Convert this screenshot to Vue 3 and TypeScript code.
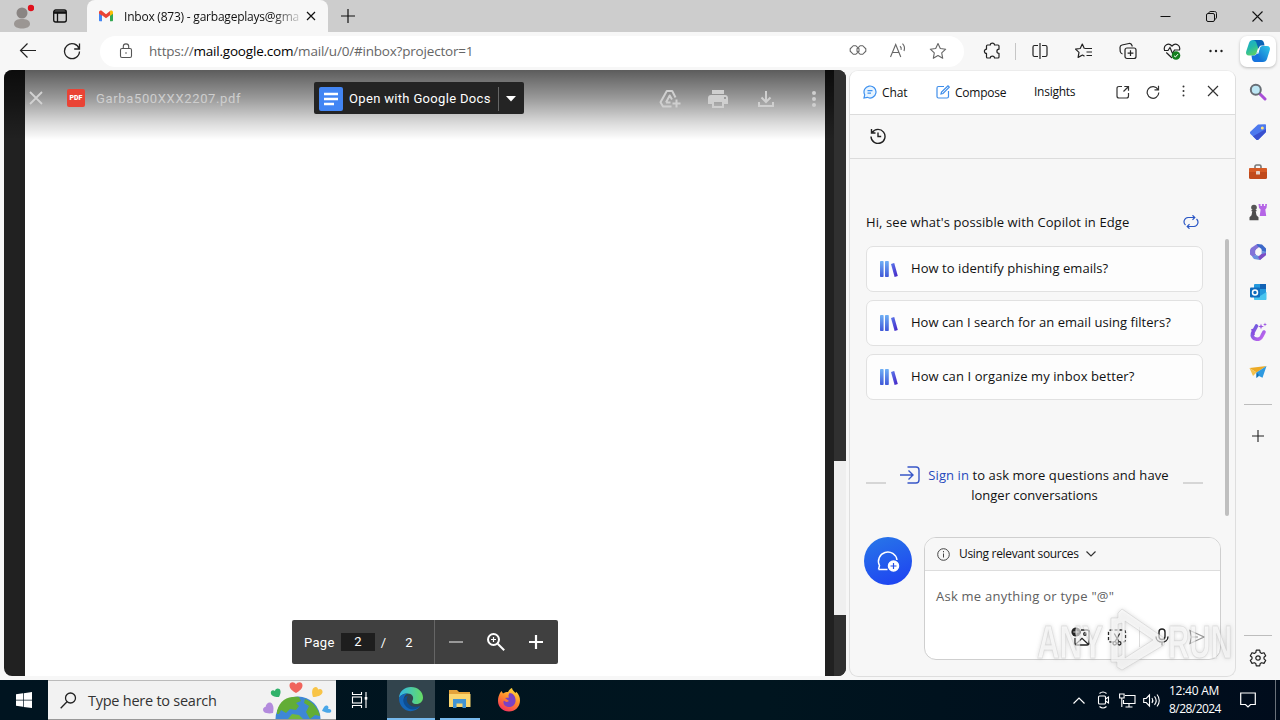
<script setup lang="ts">
const prompts: { text: string; cls: string }[] = [
  { text: 'How to identify phishing emails?', cls: 'p1' },
  { text: 'How can I search for an email using filters?', cls: 'p2' },
  { text: 'How can I organize my inbox better?', cls: 'p3' },
]
</script>

<template>
  <div class="desktop">
    <header class="titlebar">
      <div class="slot avatar">
        <svg width="24" height="28" viewBox="0 0 24 28"><circle cx="12" cy="11" r="5.500" fill="#8a8583"/><path d="M4 22c0-4 4-5 8-5s8 1 8 5c0 3-4 4.500-8 4.500S4 25 4 22z" fill="#9b9693"/><circle cx="21" cy="6" r="3.200" fill="#e0101c"/></svg>
      </div>
      <div class="slot spaces">
        <svg width="16" height="16" viewBox="0 0 16 16" fill="none" stroke="#111" stroke-width="1.300"><rect x="1.700" y="2" width="12.600" height="12" rx="2"/><path d="M2 4.500h12" stroke-width="2.600"/><path d="M5.500 5v9"/></svg>
      </div>
      <div class="tab">
        <svg class="gmail" width="16" height="16" viewBox="0 0 16 16"><path d="M1 5v7.200c0 .6.400 1 1 1h2V7z" fill="#4285f4"/><path d="M12 7v6.200h2c.6 0 1-.4 1-1V5z" fill="#34a853"/><path d="M1 4.500C1 2.600 3 2.200 4 3l4 3.200L12 3v4.200L8 10.300 4 7.300v.4L1 5.500z" fill="#ea4335"/><path d="M12 3c1.200-.9 3-.3 3 1.500v1.200l-3 2.200z" fill="#fbbc04"/></svg>
        <span class="tab-title">Inbox (873) - garbageplays@gma</span>
        <svg class="tab-x" width="10" height="10" viewBox="0 0 10 10" stroke="#111" stroke-width="1.200"><path d="M1 1l8 8M9 1L1 9"/></svg>
      </div>
      <div class="slot newtab"><svg width="14" height="14" viewBox="0 0 14 14" stroke="#111" stroke-width="1.200"><path d="M7 0v14M0 7h14"/></svg></div>
      <div class="winbtns">
        <div class="win"><svg width="11" height="11" viewBox="0 0 11 11" stroke="#111"><path d="M.5 5.500h10"/></svg></div>
        <div class="win"><svg width="11" height="11" viewBox="0 0 11 11" fill="none" stroke="#111"><rect x=".5" y="2.500" width="8" height="8" rx="1.500"/><path d="M2.700 2.300C3 1 3.500.5 5 .5h3.500c1.300 0 2 .7 2 2V6c0 1.500-.6 2-1.800 2.300"/></svg></div>
        <div class="win"><svg width="11" height="11" viewBox="0 0 11 11" stroke="#111" stroke-width="1.100"><path d="M.5.5l10 10M10.500.5l-10 10"/></svg></div>
      </div>
    </header>

    <div class="toolbar">
      <div class="slot tb first"><svg width="18" height="18" viewBox="0 0 18 18" fill="none" stroke="#222" stroke-width="1.200"><path d="M17 8.500H1.500M8.500 1.500l-7 7 7 7"/></svg></div>
      <div class="slot tb"><svg width="18" height="18" viewBox="0 0 18 18" fill="none" stroke="#222" stroke-width="1.300"><path d="M16.200 7A7.500 7.500 0 1 0 16.500 9.500M16.500 1.500V7h-5.300"/></svg></div>
      <div class="address">
        <svg class="lock" width="14" height="16" viewBox="0 0 14 16" fill="none" stroke="#555" stroke-width="1.100"><rect x="1.500" y="5.500" width="11" height="9" rx="1.500"/><path d="M4.300 5.500V3.600a2.700 2.700 0 0 1 5.400 0v1.900"/><circle cx="7" cy="10" r=".8" fill="#555" stroke="none"/></svg>
        <span class="url"><span>https://</span><b>mail.google.com</b><span class="path">/mail/u/0/#inbox?projector=1</span></span>
        <div class="addr-icons">
          <div class="ai"><svg width="18" height="16" viewBox="0 0 18 16" fill="none" stroke="#666" stroke-width="1.100"><path d="M8.300 5.200L6.800 3.700H4.300L1.200 6.800v2.400l3.100 3.100h2.500l1.500-1.500M9.700 5.200l1.500-1.500h2.500l3.100 3.100v2.400l-3.100 3.100h-2.500L8 9.200V6.800zM8.300 5.200L10 6.800v2.400l-1.700 1.600"/></svg></div>
          <div class="ai"><svg width="18" height="17" viewBox="0 0 18 17" fill="none" stroke="#666" stroke-width="1.100"><path d="M1.500 15L6.700 2.500 11.800 15M3.500 10.500h6.500M11 4.200c1 .8 1.500 2.200 1.100 3.600M13.500 1.700c2 1.900 2.400 4.600 1.500 7.300"/></svg></div>
          <div class="ai"><svg width="18" height="18" viewBox="0 0 18 18" fill="none" stroke="#666" stroke-width="1.100" stroke-linejoin="round"><path d="M9 1.500l2.300 5 5.400.7-4 3.700 1 5.400L9 13.600l-4.700 2.700 1-5.400-4-3.700 5.400-.7z"/></svg></div>
        </div>
      </div>
      <div class="slot tb ext"><svg width="18" height="18" viewBox="0 0 18 18" fill="none" stroke="#222" stroke-width="1.200" stroke-linejoin="round"><path d="M4.500 3h2.800c0-2.600 4.200-2.600 4.200 0H15c.6 0 1 .4 1 1v3.200c-2.800 0-2.800 4.200 0 4.200V15c0 .6-.4 1-1 1h-3.500c0-2.600-4.200-2.600-4.200 0H4.500c-.6 0-1-.4-1-1v-3.600c-2.800 0-2.800-4.200 0-4.200V4c0-.6.400-1 1-1z"/></svg></div>
      <i class="tbsep"></i>
      <div class="slot tb"><svg width="18" height="16" viewBox="0 0 18 16" fill="none" stroke="#222" stroke-width="1.200"><path d="M7 2.500H3.500c-1 0-1.500.5-1.500 1.500v8c0 1 .5 1.500 1.500 1.500H7M11 2.500h3.500c1 0 1.500.5 1.500 1.500v8c0 1-.5 1.500-1.500 1.500H11M9 0v16"/></svg></div>
      <div class="slot tb"><svg width="18" height="18" viewBox="0 0 18 18" fill="none" stroke="#222" stroke-width="1.200" stroke-linejoin="round"><path d="M9.500 6.500H17M11.500 10H17M11.500 13.500H17M9.300 6.500L7.300 2 5.200 6.500l-4.700.6 3.500 3.300-.9 5L7.500 13l2 1.200"/></svg></div>
      <div class="slot tb"><svg width="18" height="18" viewBox="0 0 18 18" fill="none" stroke="#222" stroke-width="1.200"><rect x="6" y="6" width="11" height="10.500" rx="2"/><path d="M11.500 8.200V14M8.600 11.200h5.800M3.500 12C2 11.500 1.500 11 1.200 9.500L1 5.500C1 4 1.500 3.300 3 3l7-1.500c1.700-.3 2.500.2 3 2l.2 1"/></svg></div>
      <div class="slot tb"><svg width="18" height="18" viewBox="0 0 18 18" fill="none" stroke="#222" stroke-width="1.200"><path d="M1.500 8C.2 3 5.500.2 9 4c3.500-3.800 8.800-1 7.500 4M3.300 10.500L9 16M1 8.500h4L7 5.500l2.500 6 2-3.500H17"/><circle cx="13" cy="13.500" r="4.300" fill="#15801f" stroke="none"/><path d="M11 13.700l1.400 1.300 2.600-2.900" stroke="#fff" stroke-width="1"/></svg></div>
      <div class="slot tb"><svg width="16" height="4" viewBox="0 0 16 4" fill="#222"><circle cx="2.500" cy="2" r="1.200"/><circle cx="8" cy="2" r="1.200"/><circle cx="13.500" cy="2" r="1.200"/></svg></div>
      <div class="copilot-btn">
        <svg width="26" height="24" viewBox="0 0 26 24"><defs><linearGradient id="ca" x1="0" y1="0" x2=".6" y2="1"><stop offset="0" stop-color="#18a8d8"/><stop offset=".5" stop-color="#25b9a8"/><stop offset="1" stop-color="#63d65c"/></linearGradient><linearGradient id="cb" x1="1" y1="0" x2="0" y2="1"><stop offset="0" stop-color="#2fc8e8"/><stop offset="1" stop-color="#0b58cf"/></linearGradient></defs><path d="M8 1h9l-2 2-3.500 11c-.5 1.500-1.500 2.500-3 2.500H4c-2.500 0-3.500-1.700-2.800-4L4 4c.6-2 2-3 4-3z" fill="url(#ca)"/><path d="M8 1h7.500c2 0 3 1 3.500 3l.5 2.500H17c-1.500 0-2.600.5-3.200 2.400L13.500 10 11.800 5C11 2.500 10.400 1.300 8 1z" fill="#0a63b5"/><path d="M18 23H9l2-2 3.500-11c.5-1.800 1.500-3 3-3H22c2.500 0 3.500 1.700 2.800 4L22 20c-.6 2-2 3-4 3z" fill="url(#cb)"/><path d="M18 23h-7.500C8.500 23 7.500 22 7 20l-.5-3.500H9c1.500 0 2.500-1 3-2.500l.5-1.500 1.700 6.500c.8 2.500 1.400 3.700 3.800 4z" fill="#1673de"/><path d="M13.700 9.500h1l-1.500 5.200h-1.200z" fill="#fff"/></svg>
      </div>
    </div>

    <main class="content">
      <section class="viewer">
        <div class="page"></div>
        <div class="track"><div class="thumb"></div></div>
        <div class="vhead">
          <svg class="vx" width="14" height="14" viewBox="0 0 14 14" stroke="#d2d2d2" stroke-width="1.800"><path d="M1 1l12 12M13 1L1 13"/></svg>
          <div class="pdf">PDF</div>
          <span class="fname">Garba500XXX2207.pdf</span>
          <div class="openwith">
            <svg width="24" height="24" viewBox="0 0 24 24"><rect width="24" height="24" rx="2" fill="#4285f4"/><path d="M5 7h14M5 12h14M5 17h10" stroke="#fff" stroke-width="2.400"/></svg>
            <span class="owt">Open with Google Docs</span>
            <i></i>
            <svg width="10" height="6" viewBox="0 0 10 6" fill="#fff"><path d="M0 0h10L5 5.500z"/></svg>
          </div>
          <div class="vicons">
            <div class="vi"><svg width="22" height="20" viewBox="0 0 22 20" fill="none" stroke="#cfcfcf" stroke-width="2" stroke-linejoin="round"><path d="M16.500 8.500L13.200 2H7.800L1.500 13.200 4 17.500h8.500M7 13.500l3.700-7 2.300 4M7 13.500h4.500M17.500 10.500v8M13.500 14.500h8"/></svg></div>
            <div class="vi"><svg width="20" height="18" viewBox="0 0 20 18" fill="#cfcfcf"><path d="M4 0h12v4H4zM3 5h14c1.700 0 3 1.300 3 3v6h-4v4H4v-4H0V8c0-1.700 1.300-3 3-3zm3 7v4h8v-4zm10-5v2h2V7z" fill-rule="evenodd"/></svg></div>
            <div class="vi"><svg width="16" height="16" viewBox="0 0 16 16" fill="none" stroke="#cfcfcf" stroke-width="2"><path d="M8 0v11M3.500 6.500L8 11l4.500-4.500M1 11v4h14v-4"/></svg></div>
            <div class="vi"><svg width="4" height="16" viewBox="0 0 4 16" fill="#cfcfcf"><circle cx="2" cy="2" r="2"/><circle cx="2" cy="8" r="2"/><circle cx="2" cy="14" r="2"/></svg></div>
          </div>
        </div>
        <div class="pager">
          <span class="pg">Page</span><span class="num">2</span><span class="slash">/</span><span class="total">2</span>
          <i></i>
          <div class="pz"><svg width="14" height="2"><path d="M0 1h14" stroke="#999" stroke-width="2"/></svg></div>
          <div class="pz"><svg width="18" height="18" viewBox="0 0 18 18" fill="none" stroke="#fff" stroke-width="2"><circle cx="6.500" cy="6.500" r="5.500"/><path d="M10.700 10.700l6.500 6.500"/><path d="M6.500 4v5M4 6.500h5" stroke-width="1.200"/></svg></div>
          <div class="pz"><svg width="14" height="14" stroke="#fff" stroke-width="2.200"><path d="M7 0v14M0 7h14"/></svg></div>
        </div>
      </section>

      <aside class="copilot">
        <div class="chead">
          <svg class="ic-chat" width="14" height="14" viewBox="0 0 14 14" fill="none" stroke="#3f91ef" stroke-width="1.200"><path d="M1 13l.7-3.200A6 6 0 1 1 4.200 12.300z" fill="#e7f4ff"/><path d="M4.500 5.700h5M4.500 8.200h3.500"/></svg>
          <span class="t-chat">Chat</span>
          <svg class="ic-comp" width="14" height="14" viewBox="0 0 14 14" fill="none" stroke="#3f8eea" stroke-width="1.200"><path d="M8 1.500H2.500c-1 0-1.500.5-1.500 1.500v8.500c0 1 .5 1.500 1.500 1.500H11c1 0 1.500-.5 1.500-1.500V6M5 9l.5-2L12 .8l1.300 1.300L7 8.500z"/></svg>
          <span class="t-comp">Compose</span>
          <span class="t-ins">Insights</span>
          <div class="cicons">
            <div class="ci"><svg width="14" height="14" viewBox="0 0 14 14" fill="none" stroke="#333" stroke-width="1.200"><path d="M6 1.500H3C1.700 1.500 1 2.200 1 3.500V11c0 1.300.7 2 2 2h7.500c1.300 0 2-.7 2-2V8M8.300 1.500h4.200v4.200M12.500 1.500L7.500 6.500"/></svg></div>
            <div class="ci"><svg width="14" height="14" viewBox="0 0 14 14" fill="none" stroke="#333" stroke-width="1.200"><path d="M12 4.500A5.800 5.800 0 1 0 12.800 7.500M12.500.8v4H8.500"/></svg></div>
            <div class="ci"><svg width="3" height="12" viewBox="0 0 3 12" fill="#333"><circle cx="1.500" cy="1.500" r="1"/><circle cx="1.500" cy="6" r="1"/><circle cx="1.500" cy="10.500" r="1"/></svg></div>
            <div class="ci"><svg width="12" height="12" viewBox="0 0 12 12" stroke="#333" stroke-width="1.200"><path d="M1 1l10 10M11 1L1 11"/></svg></div>
          </div>
        </div>
        <div class="chist"><svg width="16" height="16" viewBox="0 0 16 16" fill="none" stroke="#222" stroke-width="1.400"><path d="M2.200 4.500A7 7 0 1 1 1 8.500M1.500 1v4h4M8 4.500v4h3.200"/></svg></div>
        <div class="cbody">
          <div class="greet"><span class="t-hi">Hi, see what's possible with Copilot in Edge</span>
            <svg width="16" height="14" viewBox="0 0 16 14" fill="none" stroke="#2b57c5" stroke-width="1.200"><path d="M2.500 10A4.300 4.300 0 0 1 5 2.500h6.500M9.500.3l2.300 2.200-2.300 2.300M13.500 4A4.300 4.300 0 0 1 11 11.500H4.500M6.500 9.200l-2.300 2.300 2.300 2.200"/></svg>
          </div>
          <div v-for="p in prompts" :key="p.cls" class="card">
            <svg width="20" height="16" viewBox="0 0 20 16"><defs><linearGradient id="bk" x1="0" y1="0" x2="0" y2="1"><stop offset="0" stop-color="#6fb0f5"/><stop offset="1" stop-color="#4058d8"/></linearGradient><linearGradient id="bl" x1="0" y1="0" x2="1" y2="1"><stop offset="0" stop-color="#5b7cec"/><stop offset="1" stop-color="#4420c4"/></linearGradient></defs><rect x="1" y="0" width="3.600" height="16" rx=".8" fill="url(#bk)"/><rect x="6" y="0" width="3.800" height="16" rx=".8" fill="url(#bk)"/><path d="M12 3l3.200-1 3.600 13-3.200 1z" fill="url(#bl)"/></svg>
            <span :class="p.cls">{{ p.text }}</span>
          </div>
          <div class="signin">
            <i></i>
            <div class="st">
              <div class="sl"><svg width="20" height="18" viewBox="0 0 20 18" fill="none" stroke="#3857c8" stroke-width="1.400"><path d="M0 9h13M8.500 4.500L13 9l-4.500 4.500M7.500 1H16c2 0 3 1 3 3v10c0 2-1 3-3 3H7.500"/></svg><span class="t-s1"><em>Sign in</em> to ask more questions and have</span></div>
              <div class="sl"><span class="t-s2">longer conversations</span></div>
            </div>
            <i></i>
          </div>
          <div class="ask">
            <div class="topic"><svg width="24" height="24" viewBox="0 0 24 24" fill="none" stroke="#fff" stroke-width="1.500"><path d="M2.500 20.500l1-4A9.300 9.300 0 1 1 21 11M2.500 20.500h9"/><circle cx="17.500" cy="17" r="5" fill="#fff"/><path d="M17.500 14v6M14.500 17h6" stroke="#254fe5" stroke-width="1.200"/></svg></div>
            <div class="box">
              <div class="src"><svg width="13" height="13" viewBox="0 0 13 13" fill="none" stroke="#444"><circle cx="6.500" cy="6.500" r="5.800"/><path d="M6.500 5.500v4M6.500 3v1.300"/></svg><span class="t-src">Using relevant sources</span><svg width="10" height="6" viewBox="0 0 10 6" fill="none" stroke="#333" stroke-width="1.200"><path d="M.5.5L5 5 9.500.5"/></svg></div>
              <div class="ph">Ask me anything or type "@"</div>
              <div class="tools">
                <svg width="20" height="20" viewBox="0 0 20 20" fill="none" stroke="#222" stroke-width="1.300"><path d="M10 3h6c1.300 0 2 .7 2 2v11c0 1.300-.7 2-2 2H6c-1.300 0-2-.7-2-2v-5M4.700 17.300l6.300-6 6.300 6"/><circle cx="14" cy="7" r="1.300"/><circle cx="5" cy="5" r="4.600" fill="#222" stroke="none"/><path d="M5 2.300v5.400M2.300 5h5.400" stroke="#ddd" stroke-width="1"/></svg>
                <svg width="20" height="18" viewBox="0 0 20 18" fill="none" stroke="#222" stroke-width="1.300"><path d="M5.500 14H4c-1.700 0-2.500-.8-2.500-2.500v-7C1.500 2.800 2.300 2 4 2h12c1.700 0 2.500.8 2.500 2.500v7c0 1.700-.8 2.500-2.500 2.500h-1.500" stroke-dasharray="3 2"/><path d="M7.300 5.500l4.500 8M12.700 5.500l-4.500 8"/><circle cx="7.700" cy="15.300" r="1.700"/><circle cx="12.300" cy="15.300" r="1.700"/></svg>
                <i></i>
                <svg width="14" height="18" viewBox="0 0 14 18" fill="none" stroke="#222" stroke-width="1.400"><rect x="4" y="1" width="6" height="10.500" rx="3"/><path d="M1 8.500c0 7.500 12 7.500 12 0M7 14v3.500"/></svg>
                <svg width="16" height="16" viewBox="0 0 16 16" fill="none" stroke="#999" stroke-width="1.200"><path d="M2.500 8L1 1.500 15 8 1 14.500zM2.500 8H9"/></svg>
              </div>
            </div>
          </div>
          <div class="cscroll"></div>
        </div>
      </aside>

      <nav class="side">
        <div class="si"><svg width="18" height="18" viewBox="0 0 18 18"><path d="M11 11l5 5" stroke="#a94fd8" stroke-width="3" stroke-linecap="round"/><circle cx="6.800" cy="6.800" r="5" fill="#bde7f5" stroke="#686e75" stroke-width="2"/></svg></div>
        <div class="si"><svg width="18" height="18" viewBox="0 0 18 18"><path d="M9 1.500l7-.2c.6 0 1 .4 1 1V9l-7.500 7.500c-.8.7-1.600.7-2.300 0L1.500 11c-.7-.8-.7-1.600 0-2.400z" fill="#4d79ee"/><path d="M17 6v3l-7.500 7.500c-.8.7-1.600.7-2.300 0L4 13.300z" fill="#3a51cf"/><circle cx="13.300" cy="5" r="1.500" fill="#ffe27a"/></svg></div>
        <div class="si"><svg width="18" height="18" viewBox="0 0 18 18"><path d="M6 5V3.500C6 2.700 6.500 2 7.500 2h3c1 0 1.500.7 1.500 1.500V5" fill="none" stroke="#777" stroke-width="1.600"/><rect x="0" y="5" width="18" height="11" rx="1.500" fill="#c14a1b"/><path d="M0 6.500C0 5.500.6 5 1.500 5h15c1 0 1.500.5 1.500 1.500V9H0z" fill="#d65a24"/><rect x="7" y="8" width="4" height="3.500" rx=".6" fill="#e6d3c9"/></svg></div>
        <div class="si"><svg width="18" height="18" viewBox="0 0 18 18"><path d="M9.500 1h2v2h1.400V1h2v2h1.300V1H18l-.5 4-1.200 1.500.9 6.500H10.700l.9-6.500L10 5z" fill="#b565e6"/><circle cx="5" cy="4.500" r="2.800" fill="#555"/><path d="M2.500 7h5v1.300H6.700l.8 4 2 2v3H.5v-3l2-2 .8-4h-.8z" fill="#4d4d4d"/></svg></div>
        <div class="si"><svg width="18" height="18" viewBox="0 0 18 18"><path d="M2 5l6-4 4 1.500-5 4v5.500L4 14l-3-2.500V7z" fill="#8273d8"/><path d="M8 1l5 .5 4 4v4.500l-4.500-2.500V6L8.500 3z" fill="#3c68c9"/><path d="M17 8.500V12l-6 5-6-1-2-2.500 4-1.500 3 1 2.500-2V8z" fill="#6b90df"/><path d="M17 10v2l-6 5-2-3 3.500-3z" fill="#7d4cc4"/><path d="M9 5.800l3.200 1.700v3.300L9 12.500l-2.800-1.700V7.500z" fill="#f7f7f7"/></svg></div>
        <div class="si"><svg width="18" height="18" viewBox="0 0 18 18"><rect x="5" y="1" width="12" height="15" rx="1" fill="#2498dc"/><path d="M5 9l6 4 6.500-4V16c0 .6-.4 1-1 1H6c-.6 0-1-.4-1-1z" fill="#49c5ef"/><path d="M11 1h6v5h-6z" fill="#1263b5"/><rect x="1" y="4.500" width="10" height="10" rx="1" fill="#0f6cbd"/><circle cx="6" cy="9.500" r="2.500" fill="none" stroke="#fff" stroke-width="1.500"/></svg></div>
        <div class="si"><svg width="18" height="20" viewBox="0 0 18 20" fill="none"><defs><linearGradient id="dg" x1="0" y1="0" x2="1" y2="1"><stop offset="0" stop-color="#6658dc"/><stop offset="1" stop-color="#c765ee"/></linearGradient></defs><path d="M7.500 4L3.500 11.500c-1.800 6 7.500 8 9.500 2.500.8-1.800 1.500-2.800 2-4" stroke="url(#dg)" stroke-width="3.600" stroke-linecap="round"/><path d="M3 7l2 6" stroke="#8a4be0" stroke-width="2"/><path d="M12 1.500l.7 2.300 2.300.7-2.300.7L12 7.500l-.7-2.300L9 4.500l2.300-.7zM16 .5l.5 1.500L18 2.500l-1.500.5L16 4.500 15.500 3 14 2.500l1.500-.5z" fill="#9b55e2"/></svg></div>
        <div class="si"><svg width="18" height="18" viewBox="0 0 18 18"><path d="M.5 5L17.500 3l-10 6.500z" fill="#ecaa25"/><path d="M.5 5l7 4.500L4 13z" fill="#f5c24c"/><path d="M17.500 3l-10 6.500V15l2.500-2 3.500 1.800z" fill="#2f9ae0"/><path d="M7.500 9.500V15l2.400-3z" fill="#176cae"/></svg></div>
        <hr class="h1" />
        <div class="plus"><svg width="12" height="12" stroke="#222" stroke-width="1.100"><path d="M6 0v12M0 6h12"/></svg></div>
        <div class="grow"></div>
        <hr />
        <div class="gear"><svg width="18" height="18" viewBox="0 0 18 18" fill="none" stroke="#222" stroke-width="1.200" stroke-linejoin="round"><path d="M7.300 1.200h3.400l.5 2.300 1.500.9 2.300-.7 1.700 3-1.700 1.500v1.700l1.700 1.500-1.700 3-2.300-.7-1.500.9-.5 2.300H7.300l-.5-2.300-1.500-.9-2.300.7-1.700-3L3 9.900V8.200L1.300 6.700l1.700-3 2.300.7 1.500-.9z"/><circle cx="9" cy="9" r="2.200"/></svg></div>
      </nav>
    </main>

    <footer class="taskbar">
      <div class="start"><svg width="16" height="16" viewBox="0 0 16 16" fill="#fff"><path d="M0 2.300l7-1v6.400H0zM7.700 1.200L16 0v7.700H7.700zM0 8.400h7v6.400l-7-1zM7.700 8.400H16V16l-8.300-1.100z"/></svg></div>
      <div class="search">
        <svg class="mag" width="17" height="17" viewBox="0 0 17 17" fill="none" stroke="#222" stroke-width="1.300"><circle cx="10.500" cy="6" r="5"/><path d="M7 9.700L.7 16.200"/></svg>
        <span class="t-search">Type here to search</span>
        <svg class="earth" width="72" height="38" viewBox="0 0 72 38"><circle cx="36" cy="38" r="22.500" fill="#3e87d6"/><path d="M15 30c3-11 11-15 22-14l2 4-5 2 3 3-3 4-6-1-4 4-5-3-2 4h-2zM43 18c8 3 13 9 15 17l-5-1-5 4-4-7 3-6-5-3z" fill="#62ad36"/><path d="M26 38l4-5 7 1 4 4z" fill="#71b83b"/><path d="M34 12c-3.500-2-6.500-4.500-6.500-7.500 0-4 5-4 6.500-1 1.500-3 6.500-3 6.500 1 0 3-3 5.500-6.500 7.500z" fill="#f0645c"/><path d="M17 16c-3 0-7-.5-8-3-1-3.500 2-4.500 4-3 0-3 5-3.500 5.500 0 .3 2-.5 4-1.500 6z" fill="#30b26b"/><path d="M51 16c-1-3-1.500-7 .5-9 2.500-2 4.500-.5 4.500 1.500 2.500-1.500 5 0 4.500 3-.8 3-5.500 4.500-9.500 4.500z" fill="#f8c447"/><path d="M11 32c-3 .8-7 .5-9-1-2-2.500-.5-5 1.500-5 .5-4 5-6.500 7-2.500C12 26 11.500 29 11 32z" fill="#b38bdd"/><path d="M60 30c1-2 2-5 4-5.500 2.500 0 3 2 2 3.500 2.500-.5 4 1 3 3-2 2-6 0-9-1z" fill="#4aa7e8"/></svg>
      </div>
      <div class="task"><svg width="18" height="16" viewBox="0 0 18 16" fill="none" stroke="#fff" stroke-width="1.100"><path d="M1.500 0v2.500h9V0M1.500 16v-2.500h9V16"/><rect x="1.500" y="5" width="9" height="6"/><path d="M15 0v16"/><rect x="13.700" y="5" width="2.600" height="2.600" fill="#fff" stroke="none"/></svg></div>
      <div class="task active"><svg width="26" height="26" viewBox="0 0 26 26"><defs><linearGradient id="eg" x1="0" x2="1"><stop offset="0" stop-color="#31b7e8"/><stop offset="1" stop-color="#66dc63"/></linearGradient></defs><path d="M1 12C1.500 5 6.500 1 13 1c7 0 12 5 12 10.500 0 4-3 6.500-6.500 6.500-4 0-5-2-4-3.500 2-3.500-.5-7-5-7C5.500 7.500 2.500 9 1 12z" fill="url(#eg)"/><path d="M1 12c1.500-3 4.500-4.500 8.500-4.500-4 2-5 7-2 11 3 3.500 9 4.500 14.500 2C18.500 25 13 26 9 24.500 4 22.500 1 18 1 12z" fill="#1466b8"/><path d="M10 10c-3 4 0 9.500 5 10.500 3 .6 5.500.2 7.500-.7-4 5-12 5.500-16-1.300C4 14 6 10.500 10 10z" fill="#0d4d91"/></svg></div>
      <div class="task open"><svg width="24" height="20" viewBox="0 0 24 20"><path d="M1 1h8l2 2h11v5H1z" fill="#e4a33a"/><path d="M1 5h21.500v13H1z" fill="#fbd66f"/><path d="M5 19v-9h13v9h-3.500v-4.500h-6V19z" fill="#4294d2"/></svg></div>
      <div class="task ff"><svg width="24" height="24" viewBox="0 0 24 24"><defs><linearGradient id="ffg" x1=".8" y1="0" x2=".3" y2="1"><stop offset="0" stop-color="#ffdf3d"/><stop offset=".5" stop-color="#ff8a2b"/><stop offset="1" stop-color="#f6315f"/></linearGradient></defs><path d="M3 5l1.500-2L6 5.500C8 4.300 9 4 11 4c1-2 2.500-3.500 4-4 0 2 2 3 3.500 5l.7-1.300C22 6.500 23 9 23 12.500 23 19 18 23.500 12 23.500S1 19 1 13c0-3 .7-5.500 2-8z" fill="url(#ffg)"/><path d="M8 10l4-.5c-1-1.500-.5-3 .5-4.500 4 0 6.500 4 6 8.500-.7 4-4 6-7.500 5.500-4-.5-5.500-4.500-4-6.500 1 1.500 3 2 5 .5z" fill="#7b42c4"/></svg></div>
      <div class="tray">
        <div class="ti t1"><svg width="12" height="7" viewBox="0 0 12 7" fill="none" stroke="#fff" stroke-width="1.200"><path d="M.5 6.500L6 1l5.500 5.500"/></svg></div>
        <div class="ti"><svg width="13" height="18" viewBox="0 0 13 18" fill="none" stroke="#fff" stroke-width="1.100"><rect x="1.500" y="5" width="7" height="8" rx="1"/><path d="M8.500 8l3-2v6l-3-2M2.500 2.500c2-1.700 5-1.700 7 0M2.500 15.500c2 1.700 5 1.700 7 0"/></svg></div>
        <div class="ti"><svg width="17" height="15" viewBox="0 0 17 15" fill="none" stroke="#fff" stroke-width="1.100"><path d="M6 2.500h10v8H4.500V7M10 10.500v3.500M6.500 14h7M.6 1h4.500v4H.6zM2.800 5v9"/></svg></div>
        <div class="ti"><svg width="17" height="15" viewBox="0 0 17 15" fill="none" stroke="#fff" stroke-width="1.100"><path d="M.7 5.500h2.500L6.500 2v11L3.200 9.500H.7zM9 5c1 1.500 1 3.500 0 5M11.500 3.300c2 2.500 2 6 0 8.500M14 1.500c3 3.500 3 8.500 0 12"/></svg></div>
        <div class="clock"><span class="ck1">12:40 AM</span><span class="ck2">8/28/2024</span></div>
        <div class="notif"><svg width="16" height="16" viewBox="0 0 16 16" fill="none" stroke="#fff" stroke-width="1.200"><path d="M.7 1h14.600v11.500H10.500L8 15l-2.500-2.500H.7z"/></svg></div>
        <div class="peek"></div>
      </div>
    </footer>

    <svg class="mark" width="208" height="68" viewBox="0 0 208 68">
      <g fill="#fff" fill-opacity=".6" stroke="#b8b8b8" stroke-opacity=".35" stroke-width="1" font-family="'Liberation Sans', sans-serif" font-size="46" font-weight="700">
        <text x="3" y="50" textLength="66" lengthAdjust="spacingAndGlyphs">ANY</text>
        <text x="134" y="50" textLength="64" lengthAdjust="spacingAndGlyphs">RUN</text>
        <path d="M77 10h7V5l4-4 42 29v7L88 62l-5-3v-5h-6zM84 16v33l4-2V15zM91 13v37l28-18z" fill-rule="evenodd"/>
      </g>
    </svg>
  </div>
</template>

<style>
html, body { margin: 0; overflow: hidden; }
</style>

<style scoped>
.desktop { position: relative; width: 1280px; height: 720px; display: flex; flex-direction: column; background: #f7f7f7; font-family: "Open Sans", "Noto Sans", sans-serif; font-size: 13px; color: #111; overflow: hidden; white-space: nowrap; }
.desktop * { box-sizing: border-box; }
svg { display: block; flex: none; }
.slot { display: flex; align-items: center; justify-content: center; flex: none; }
.titlebar { height: 32px; background: #cdcdcd; display: flex; flex: none; }
.avatar { width: 44px; height: 32px; }
.spaces { width: 32px; height: 32px; }
.tab { width: 241px; margin-left: 11px; background: #f7f7f7; border-radius: 8px 8px 0 0; display: flex; align-items: center; padding-left: 11px; }
.tab-title { margin-left: 10px; width: 176px; font-size: 12px; letter-spacing: -.22px; mask-image: linear-gradient(90deg, #000 148px, rgba(0,0,0,.15) 176px); }
.tab-x { margin-left: 6px; }
.newtab { width: 40px; height: 32px; }
.winbtns { margin-left: auto; display: flex; }
.win { width: 46px; height: 32px; display: flex; align-items: center; justify-content: center; }

.toolbar { height: 38px; background: #f7f7f7; display: flex; align-items: center; flex: none; }
.tb { width: 44px; height: 36px; }
.first { margin-left: 6px; }
.address { width: 864px; height: 31px; margin-left: 6px; background: #fff; border-radius: 16px; display: flex; align-items: center; padding-left: 19px; }
.url { margin-left: 16px; font-size: 13.5px; letter-spacing: -.2px; color: #666; }
.url b { font-weight: 400; color: #000; }
.addr-icons { display: flex; margin-left: auto; padding-right: 6px; }
.ai { width: 40px; display: flex; justify-content: center; }
.ext { margin-left: 6px; }
.tbsep { width: 1px; height: 17px; background: #c6c6c6; margin: 0 2px 0 1px; }
.copilot-btn { width: 36px; height: 31px; margin-left: 2px; background: #fff; border-radius: 7px; box-shadow: 0 1px 3px rgba(0,0,0,.25); display: flex; align-items: center; justify-content: center; }

.content { height: 610px; display: flex; flex: none; }
.viewer { position: relative; width: 842px; height: 606px; margin-left: 4px; background: #212121; border-radius: 8px; overflow: hidden; display: flex; justify-content: space-between; flex: none; }
.page { width: 800px; margin-left: 21px; background: #fff; }
.track { width: 12px; background: #303030; padding-top: 391px; }
.thumb { height: 154px; background: #efefef; }
.vhead { position: absolute; left: 0; top: 0; width: 830px; height: 70px; background: linear-gradient(rgba(0,0,0,.64), rgba(0,0,0,.4) 40%, rgba(0,0,0,.15) 75%, transparent); display: flex; align-items: center; padding: 0 0 14px 25px; }
.pdf { width: 18px; height: 18px; margin-left: 24px; background: #ea4335; border-radius: 2px; color: #fff; font: 900 7px/18px Roboto, sans-serif; text-align: center; }
.fname { margin-left: 11px; color: #cecece; font: 13px Roboto, sans-serif; letter-spacing: .65px; width: 218px; }
.openwith { width: 210px; height: 32px; background: #242424; border-radius: 2px; display: flex; align-items: center; padding: 2px 0 0 5px; color: #fff; font: 13px Roboto, sans-serif; }
.owt { margin-left: 6px; width: 149px; letter-spacing: .33px; margin-top: -1px; }
.openwith i { width: 1px; height: 24px; background: #666; margin-right: 7px; }
.vicons { display: flex; margin-left: auto; margin-right: -4px; padding-top: 2px; }
.vi { width: 48px; height: 20px; display: flex; justify-content: center; align-items: center; }
.pager { position: absolute; left: 288px; top: 550px; width: 266px; height: 44px; background: #404040; border-radius: 2px; display: flex; align-items: center; color: #fff; font: 13px Roboto, sans-serif; }
.pg { margin-left: 12px; width: 37px; letter-spacing: .3px; }
.num { width: 34px; height: 18px; background: #1e1e1e; text-align: center; line-height: 18px; }
.slash { width: 17px; text-align: center; }
.total { width: 34px; text-align: center; }
.pager i { width: 1px; height: 44px; background: #666; margin-left: 8px; margin-right: 1px; }
.pz { width: 40px; display: flex; justify-content: center; }

.copilot { width: 387px; height: 607px; margin-left: 3px; border: 1px solid #dedede; border-top-color: #ececec; border-radius: 9px; overflow: hidden; display: flex; flex-direction: column; flex: none; }
.chead { height: 44px; flex: none; background: #fff; border-bottom: 1px solid #dcdcdc; display: flex; align-items: center; padding: 0 0 1px 13px; font-size: 12px; }
.t-chat { margin-left: 5px; width: 54px; letter-spacing: -.1px; }
.t-comp { margin-left: 5px; width: 79px; letter-spacing: -.25px; }
.t-ins { letter-spacing: -.25px; margin-top: -1px; }
.cicons { display: flex; margin-left: auto; padding-right: 7px; }
.ci { width: 30px; display: flex; justify-content: center; }
.chist { height: 44px; flex: none; border-bottom: 1px solid #dcdcdc; display: flex; align-items: center; padding: 0 0 1px 20px; }
.cbody { position: relative; flex: 1; padding: 53px 32px 0 16px; }
.greet { height: 20px; display: flex; justify-content: space-between; align-items: center; padding-right: 4px; margin-bottom: 14px; }
.t-hi { letter-spacing: .09px; }
.card { height: 46px; margin-bottom: 8px; background: #fdfdfd; border: 1px solid #e1e1e1; border-radius: 7px; display: flex; align-items: center; padding-left: 12px; }
.card span { margin-left: 12px; padding-bottom: 2px; }
.p1 { letter-spacing: .06px; }
.p2 { letter-spacing: .04px; }
.p3 { letter-spacing: .1px; }
.signin { display: flex; justify-content: space-between; align-items: center; height: 40px; margin-top: 65px; }
.signin > i { width: 20px; height: 2px; background: #d6d6d6; margin-bottom: 6px; margin-top: 2px; }
.sl { display: flex; justify-content: center; align-items: center; height: 20px; gap: 8px; }
.t-s1 { letter-spacing: .09px; }
.sl em { font-style: normal; color: #2649bd; }
.ask { display: flex; margin: 32px -18px 0 -2px; justify-content: space-between; }
.topic { width: 48px; height: 48px; border-radius: 50%; background: linear-gradient(160deg, #2878e8, #1d3ff2); display: flex; align-items: center; justify-content: center; }
.box { width: 297px; height: 123px; background: #fff; border: 1px solid #cfcfcf; border-radius: 12px; overflow: hidden; }
.src { height: 33px; background: #f7f7f7; border-bottom: 1px solid #ddd; display: flex; align-items: center; padding-left: 12px; font-size: 12px; }
.t-src { margin: 0 7px 0 9px; letter-spacing: -.32px; padding-bottom: 1px; }
.ph { margin: 15px 0 0 11px; color: #606060; height: 20px; line-height: 20px; letter-spacing: .24px; }
.tools { display: flex; align-items: center; margin: 20px 0 0 146px; height: 22px; }
.tools svg:nth-of-type(2) { margin-left: 16px; }
.tools i { width: 1px; height: 20px; background: #ddd; margin: 0 15px 0 12px; }
.tools svg:last-child { margin-left: 20px; }
.cscroll { position: absolute; right: 6px; top: 80px; width: 4px; height: 277px; border-radius: 2px; background: #bfbfbf; }

.side { width: 44px; height: 610px; display: flex; flex-direction: column; align-items: center; padding-top: 2px; }
.si { height: 40px; display: flex; align-items: center; }
hr { width: 28px; height: 1px; border: 0; margin: 0; background: #bdbdbd; }
.h1 { margin-top: 12px; }
.plus { margin-top: 25px; }
.grow { flex: 1; }
.gear { height: 44px; display: flex; align-items: center; }

.taskbar { height: 40px; background: linear-gradient(90deg, #001420, #00151f 60%, #000c1c); display: flex; flex: none; color: #fff; }
.start { width: 48px; display: flex; align-items: center; justify-content: center; }
.search { width: 288px; background: #f2f2f2; border-top: 1px solid #bbb; border-bottom: 1px solid #999; display: flex; align-items: center; padding: 0 2px 0 12px; color: #333; }
.t-search { margin-left: 11px; font-size: 14.5px; letter-spacing: -.25px; flex: 1; }
.task { width: 48px; display: flex; align-items: center; justify-content: center; }
.active { margin-left: 3px; background: #32444d; border-bottom: 2px solid #76b9ed; }
.open { width: 40px; margin-left: 5px; border-bottom: 2px solid #76b9ed; }
.ff { margin-left: 5px; }
.tray { display: flex; margin-left: auto; align-items: center; font: 12px "Open Sans", sans-serif; }
.ti { width: 24px; display: flex; justify-content: center; }
.t1 { width: 25px; }
.clock { width: 62px; display: flex; flex-direction: column; align-items: center; line-height: 18px; }
.ck1 { letter-spacing: -.25px; }
.ck2 { letter-spacing: -.55px; margin-left: 2px; }
.notif { width: 45px; display: flex; justify-content: center; }
.peek { width: 5px; height: 40px; border-left: 1px solid #69717a; margin-left: 5px; }
.mark { position: absolute; left: 1034px; top: 608px; filter: drop-shadow(0 0 2px rgba(90,90,90,.35)); }
</style>
